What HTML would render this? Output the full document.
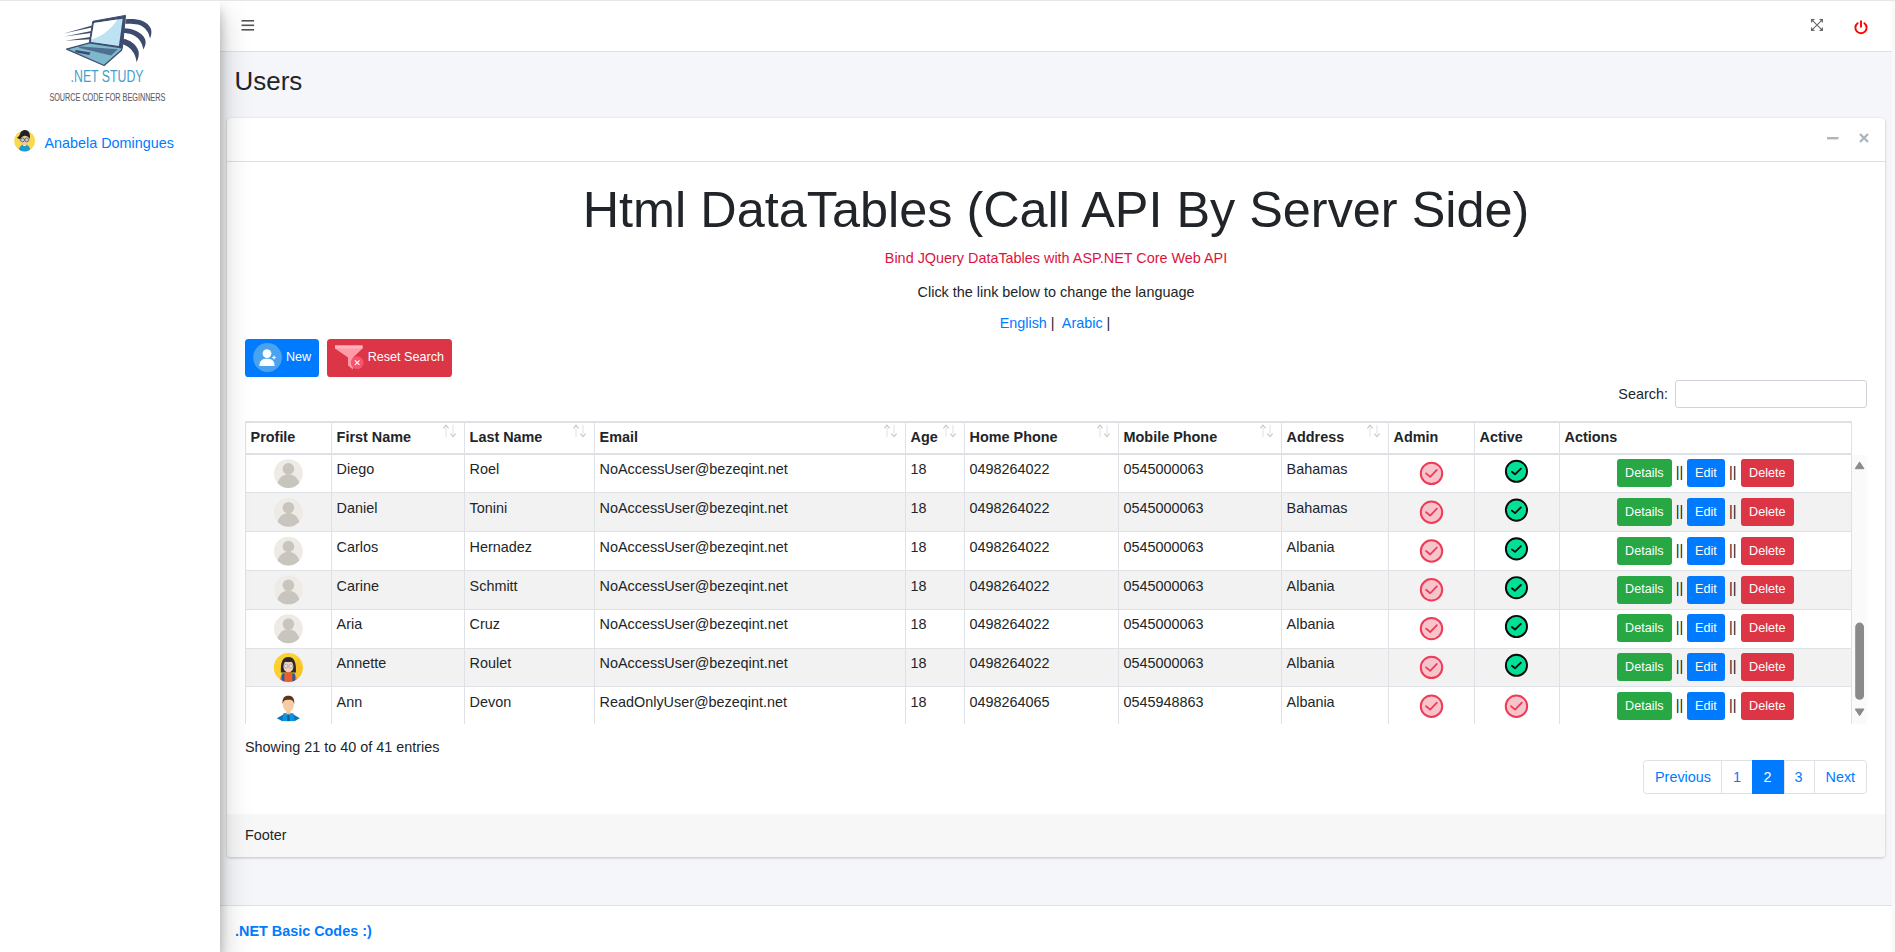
<!DOCTYPE html>
<html><head><meta charset="utf-8">
<style>
*{box-sizing:border-box;margin:0;padding:0}
html,body{width:1895px;height:952px;overflow:hidden}
body{position:relative;background:#f4f6f9;font-family:"Liberation Sans",sans-serif;color:#212529;font-size:14.4px}
.a{position:absolute}
.t{position:absolute;white-space:nowrap;line-height:1}
#topline{left:0;top:0;width:1895px;height:1px;background:#e6e6e6;z-index:20}
#rstrip{left:1892px;top:1px;width:3px;height:951px;background:#f9f9f9;z-index:15}
#sidebar{left:0;top:1px;width:220px;height:951px;background:#fff;z-index:10;box-shadow:0 14px 28px rgba(0,0,0,.25),0 10px 10px rgba(0,0,0,.22)}
#nav{left:220px;top:1px;width:1672px;height:51px;background:#fff;border-bottom:1px solid #dee2e6}
#card{left:227px;top:118px;width:1658px;height:739px;background:#fff;border-radius:3.6px;box-shadow:0 0 1px rgba(0,0,0,.125),0 1px 3px rgba(0,0,0,.2)}
#cardhead{left:0;top:0;width:1658px;height:44px;border-bottom:1px solid rgba(0,0,0,.125)}
#cardfoot{left:0;top:695.7px;width:1658px;height:43.3px;background:#f7f7f7;border-radius:0 0 3.6px 3.6px}
#mainfoot{left:220px;top:905px;width:1672px;height:47px;background:#fff;border-top:1px solid #dee2e6}
.ctr{left:0;width:1658px;text-align:center}
a{color:#007bff;text-decoration:none}
.btn{position:absolute;border-radius:3.6px;color:#fff;font-size:12.6px}
</style></head><body>
<div id="topline" class="a"></div>
<div id="rstrip" class="a"></div>

<div id="sidebar" class="a">
  <svg class="a" style="left:0;top:-1px" width="220" height="110" viewBox="0 0 220 110">
    <!-- swoosh lines left -->
    <path d="M63.8 33.4 L92 25.4 L91.7 27.6 Z" fill="#3d4b6e"/>
    <path d="M64.4 36.6 L91.4 30.9 L91.1 33.1 Z" fill="#3d4b6e"/>
    <path d="M65 40.7 L90.6 37.0 L90.3 39.2 Z" fill="#3d4b6e"/>
    <!-- right arcs -->
    <path d="M125.8 19.3 C136 18.5 147 20 151 29 C152 33 151 36 150 38.5 C149 33 146 27 138 24.5 C133 23.5 128 23.5 125.2 23.8 Z" fill="#3d4b6e"/>
    <path d="M124.3 28.2 C133 28.5 142 32 145 39 C146.5 43 145 47 143.2 49.5 C142.5 43 139 37.5 132 34.5 C129 33.5 126 33 123.8 33 Z" fill="#3d4b6e"/>
    <path d="M123.2 38.8 C130 40 136 44 138.5 51 C139.5 55 138 59 136.6 62.3 C136 56 133 50 127.5 46.5 C125.5 45.5 123.5 44.5 122.5 44.3 Z" fill="#3d4b6e"/>
    <!-- screen -->
    <path d="M92.8 21.3 L125.5 15.4 L122.4 47.8 L89.3 42.8 Z" fill="#3d4b6e" stroke="#3d4b6e" stroke-width="1" stroke-linejoin="round"/>
    <path d="M94 22.9 L122.7 18.8 L118.9 45.9 L90.9 42.1 Z" fill="#bde2f2"/>
    <path d="M94 22.9 L117.3 19.5 C112 28 103 36 91.3 39.6 Z" fill="#ffffff"/>
    <!-- base -->
    <path d="M66.6 49.1 L89.6 42.8 L122.1 47.8 L121.4 50.2 L104.1 65.5 Z" fill="#7db8cc" stroke="#3d4b6e" stroke-width="1.3" stroke-linejoin="round"/>
    <path d="M77.8 46.2 L117.8 49.3 L111 55.4 L79.5 48.0 Z" fill="#4f6f90"/>
    <path d="M75.6 49.9 L90.6 52.4 L89.2 55.0 L75.2 52.3 Z" fill="#3d4b6e"/>
    <text x="70.6" y="82.2" font-family="Liberation Sans" font-size="17" fill="#449fc7" transform="translate(70.6 82.2) scale(0.725 1) translate(-70.6 -82.2)">.NET STUDY</text>
    <text x="49.4" y="101" font-family="Liberation Sans" font-size="10.4" fill="#5f5d66" stroke="#5f5d66" stroke-width="0.1" transform="translate(49.4 101) scale(0.697 1) translate(-49.4 -101)">SOURCE CODE FOR BEGINNERS</text>
  </svg>
  <svg class="a" style="left:14px;top:128px" width="22" height="24" viewBox="0 0 22 24">
    <defs><clipPath id="uc"><circle cx="10.6" cy="11.9" r="10.5"/></clipPath></defs>
    <circle cx="10.6" cy="11.9" r="10.5" fill="#f9da4f"/>
    <g clip-path="url(#uc)">
      <path d="M4.6 24 C4.6 18 7 15.6 10.6 15.6 C14.2 15.6 16.6 18 16.6 24 Z" fill="#1b9ad8"/>
    </g>
    <rect x="9.4" y="13.5" width="2.4" height="2.8" fill="#f0b08c"/>
    <ellipse cx="10.6" cy="16.3" rx="1.7" ry="0.8" fill="#f4f4f4"/>
    <circle cx="5.8" cy="11.3" r="1.1" fill="#f2b690"/>
    <circle cx="15.4" cy="11.3" r="1.1" fill="#f2b690"/>
    <ellipse cx="10.6" cy="11" rx="4.3" ry="4.8" fill="#f5c39c"/>
    <path d="M2.9 8.7 C4.5 8 5.5 7 6 5 C7 2 9 1 11.1 1.1 C14 1.2 16 3.5 16 7.5 L15.6 10 C14.5 7.5 12 6.5 10.5 6.8 C8.5 7 7 8.5 6.3 10.5 Z" fill="#1e2326"/>
    <circle cx="8.6" cy="10.9" r="1.9" fill="#b9d5e0" stroke="#454545" stroke-width="0.7"/>
    <circle cx="12.7" cy="10.9" r="1.9" fill="#b9d5e0" stroke="#454545" stroke-width="0.7"/>
  </svg>
  <div class="t" style="left:44.4px;top:134.6px;color:#007bff">Anabela Domingues</div>
</div>

<div id="nav" class="a">
  <svg class="a" style="left:21px;top:18px" width="14" height="13" viewBox="0 0 14 13">
    <rect x="0.5" y="1" width="12.6" height="1.6" fill="#555"/>
    <rect x="0.5" y="5.5" width="12.6" height="1.6" fill="#555"/>
    <rect x="0.5" y="10" width="12.6" height="1.6" fill="#555"/>
  </svg>
  <svg class="a" style="left:1591px;top:17.8px" width="12" height="12" viewBox="0 0 12 12">
    <path d="M1.6 1.6 L10.4 10.4 M10.4 1.6 L1.6 10.4" stroke="#6a6a6a" stroke-width="1.1"/>
    <path d="M0 0 H4 L0 4 Z M12 0 H8 L12 4 Z M0 12 H4 L0 8 Z M12 12 H8 L12 8 Z" fill="#6a6a6a"/>
  </svg>
  <svg class="a" style="left:1633px;top:18px" width="16" height="16" viewBox="0 0 16 16">
    <path d="M4.6 4.2 A5.6 5.6 0 1 0 11.4 4.2" fill="none" stroke="#ff0000" stroke-width="1.9" stroke-linecap="round"/>
    <path d="M8 2.2 V7.8" stroke="#ff0000" stroke-width="1.9" stroke-linecap="round"/>
  </svg>
</div>

<div class="t" style="left:234.6px;top:69.06px;font-size:25.92px;color:#212529">Users</div>

<div id="card" class="a">
  <div id="cardhead" class="a"></div>
  <svg class="a" style="left:1599px;top:19px" width="14" height="4" viewBox="0 0 14 4"><rect x="1" y="0" width="11.5" height="2.4" fill="#adb5bd"/></svg>
  <svg class="a" style="left:1630.5px;top:14.3px" width="12" height="12" viewBox="0 0 12 12"><path d="M2 2 L10 10 M10 2 L2 10" stroke="#adb5bd" stroke-width="2.4"/></svg>

  <div class="t ctr" style="top:67.1px;font-size:50.4px">Html DataTables (Call API By Server Side)</div>
  <div class="t ctr" style="top:133.4px;color:#dc143c">Bind JQuery DataTables with ASP.NET Core Web API</div>
  <div class="t ctr" style="top:166.5px">Click the link below to change the language</div>
  <div class="t ctr" style="top:197.5px;left:-1px"><a>English</a> |&nbsp; <a>Arabic</a> |</div>

  <div id="cardfoot" class="a"><div class="t" style="left:18px;top:14.1px">Footer</div></div>
</div>

<div id="mainfoot" class="a"><div class="t" style="left:15px;top:17.6px;font-weight:bold;color:#007bff">.NET Basic Codes :)</div></div>


<div class="a" style="left:245px;top:339px;width:74px;height:38px;background:#007bff;border-radius:3.6px;z-index:2">
  <svg class="a" style="left:8px;top:4px" width="30" height="30" viewBox="0 0 30 30">
    <circle cx="14.5" cy="14.5" r="14.4" fill="#4aa3ef"/>
    <circle cx="14" cy="10.6" r="4.4" fill="#fff"/>
    <path d="M6.4 23 C6.4 17.5 9.5 15.8 14 15.8 C18.5 15.8 21.6 17.5 21.6 23 Z" fill="#fff"/>
    <path d="M21 12 L21.7 13.8 L23.5 14.5 L21.7 15.2 L21 17 L20.3 15.2 L18.5 14.5 L20.3 13.8 Z" fill="#fff"/>
  </svg>
  <div class="t" style="left:41px;top:11.93px;font-size:12.6px;color:#fff">New</div>
</div>


<div class="a" style="left:327px;top:339px;width:125px;height:38px;background:#dc3545;border-radius:3.6px;z-index:2">
  <svg class="a" style="left:7px;top:5px" width="32" height="28" viewBox="0 0 32 28">
    <path d="M1 1.5 H28.5 V4.5 L19 13.5 V25.5 L14 21.5 V13.5 L1 4.5 Z" fill="#ff9aa8"/>
    <path d="M1 1.5 H28.5 V4.5 H1 Z" fill="#ffb3bd"/>
    <circle cx="23.2" cy="18.6" r="6.4" fill="#f5566e"/>
    <path d="M20.9 16.3 L25.5 20.9 M25.5 16.3 L20.9 20.9" stroke="#fff" stroke-width="1.1"/>
  </svg>
  <div class="t" style="left:40.7px;top:11.93px;font-size:12.6px;color:#fff">Reset Search</div>
</div>

<div class="t" style="left:1618.3px;top:386.81px">Search:</div>
<div class="a" style="left:1675px;top:380px;width:192px;height:28px;border:1px solid #ced4da;border-radius:3px;background:#fff"></div>
<div class="a" style="left:245px;top:421px;width:1607px;height:2px;background:#dee2e6"></div>
<div class="a" style="left:245px;top:453px;width:1607px;height:2px;background:#dee2e6"></div>
<div class="a" style="left:245px;top:421px;width:1px;height:34px;background:#dee2e6"></div>
<div class="a" style="left:331px;top:421px;width:1px;height:34px;background:#dee2e6"></div>
<div class="a" style="left:464px;top:421px;width:1px;height:34px;background:#dee2e6"></div>
<div class="a" style="left:594px;top:421px;width:1px;height:34px;background:#dee2e6"></div>
<div class="a" style="left:905px;top:421px;width:1px;height:34px;background:#dee2e6"></div>
<div class="a" style="left:964px;top:421px;width:1px;height:34px;background:#dee2e6"></div>
<div class="a" style="left:1118px;top:421px;width:1px;height:34px;background:#dee2e6"></div>
<div class="a" style="left:1281px;top:421px;width:1px;height:34px;background:#dee2e6"></div>
<div class="a" style="left:1388px;top:421px;width:1px;height:34px;background:#dee2e6"></div>
<div class="a" style="left:1474px;top:421px;width:1px;height:34px;background:#dee2e6"></div>
<div class="a" style="left:1559px;top:421px;width:1px;height:34px;background:#dee2e6"></div>
<div class="a" style="left:1851px;top:421px;width:1px;height:34px;background:#dee2e6"></div>
<div class="t" style="left:250.60px;top:429.81px;font-weight:bold">Profile</div>
<div class="t" style="left:336.60px;top:429.81px;font-weight:bold">First Name</div>
<svg class="a" style="left:443px;top:424px" width="16" height="14"><use href="#sortarr"/></svg>
<div class="t" style="left:469.60px;top:429.81px;font-weight:bold">Last Name</div>
<svg class="a" style="left:573px;top:424px" width="16" height="14"><use href="#sortarr"/></svg>
<div class="t" style="left:599.60px;top:429.81px;font-weight:bold">Email</div>
<svg class="a" style="left:884px;top:424px" width="16" height="14"><use href="#sortarr"/></svg>
<div class="t" style="left:910.60px;top:429.81px;font-weight:bold">Age</div>
<svg class="a" style="left:943px;top:424px" width="16" height="14"><use href="#sortarr"/></svg>
<div class="t" style="left:969.60px;top:429.81px;font-weight:bold">Home Phone</div>
<svg class="a" style="left:1097px;top:424px" width="16" height="14"><use href="#sortarr"/></svg>
<div class="t" style="left:1123.60px;top:429.81px;font-weight:bold">Mobile Phone</div>
<svg class="a" style="left:1260px;top:424px" width="16" height="14"><use href="#sortarr"/></svg>
<div class="t" style="left:1286.60px;top:429.81px;font-weight:bold">Address</div>
<svg class="a" style="left:1367px;top:424px" width="16" height="14"><use href="#sortarr"/></svg>
<div class="t" style="left:1393.60px;top:429.81px;font-weight:bold">Admin</div>
<div class="t" style="left:1479.60px;top:429.81px;font-weight:bold">Active</div>
<div class="t" style="left:1564.60px;top:429.81px;font-weight:bold">Actions</div>
<div class="a" style="left:245px;top:455px;width:1607px;height:269px;overflow:hidden;z-index:1">
<div class="a" style="left:0;top:-2px;width:1607px;height:39px;background:#fff;border-top:1px solid #dee2e6"></div>
<div class="t" style="left:91.60px;top:7.11px">Diego</div>
<div class="t" style="left:224.60px;top:7.11px">Roel</div>
<div class="t" style="left:354.60px;top:7.11px">NoAccessUser@bezeqint.net</div>
<div class="t" style="left:665.60px;top:7.11px">18</div>
<div class="t" style="left:724.60px;top:7.11px">0498264022</div>
<div class="t" style="left:878.60px;top:7.11px">0545000063</div>
<div class="t" style="left:1041.60px;top:7.11px">Bahamas</div>
<div class="a" style="left:1372.00px;top:4.00px;width:54.7px;height:28px;background:#28a745;border-radius:2.9px"></div>
<div class="t" style="left:1380.10px;top:11.63px;font-size:12.6px;color:#fff">Details</div>
<div class="t" style="left:1430.70px;top:10.11px">||</div>
<div class="a" style="left:1442.00px;top:4.00px;width:37.9px;height:28px;background:#007bff;border-radius:2.9px"></div>
<div class="t" style="left:1450.10px;top:11.63px;font-size:12.6px;color:#fff">Edit</div>
<div class="t" style="left:1483.90px;top:10.11px">||</div>
<div class="a" style="left:1496.00px;top:4.00px;width:52.6px;height:28px;background:#dc3545;border-radius:2.9px"></div>
<div class="t" style="left:1504.10px;top:11.63px;font-size:12.6px;color:#fff">Delete</div>
<div class="a" style="left:0;top:37px;width:1607px;height:39px;background:#f2f2f2;border-top:1px solid #dee2e6"></div>
<div class="t" style="left:91.60px;top:46.11px">Daniel</div>
<div class="t" style="left:224.60px;top:46.11px">Tonini</div>
<div class="t" style="left:354.60px;top:46.11px">NoAccessUser@bezeqint.net</div>
<div class="t" style="left:665.60px;top:46.11px">18</div>
<div class="t" style="left:724.60px;top:46.11px">0498264022</div>
<div class="t" style="left:878.60px;top:46.11px">0545000063</div>
<div class="t" style="left:1041.60px;top:46.11px">Bahamas</div>
<div class="a" style="left:1372.00px;top:43.00px;width:54.7px;height:28px;background:#28a745;border-radius:2.9px"></div>
<div class="t" style="left:1380.10px;top:50.63px;font-size:12.6px;color:#fff">Details</div>
<div class="t" style="left:1430.70px;top:49.11px">||</div>
<div class="a" style="left:1442.00px;top:43.00px;width:37.9px;height:28px;background:#007bff;border-radius:2.9px"></div>
<div class="t" style="left:1450.10px;top:50.63px;font-size:12.6px;color:#fff">Edit</div>
<div class="t" style="left:1483.90px;top:49.11px">||</div>
<div class="a" style="left:1496.00px;top:43.00px;width:52.6px;height:28px;background:#dc3545;border-radius:2.9px"></div>
<div class="t" style="left:1504.10px;top:50.63px;font-size:12.6px;color:#fff">Delete</div>
<div class="a" style="left:0;top:76px;width:1607px;height:39px;background:#fff;border-top:1px solid #dee2e6"></div>
<div class="t" style="left:91.60px;top:85.11px">Carlos</div>
<div class="t" style="left:224.60px;top:85.11px">Hernadez</div>
<div class="t" style="left:354.60px;top:85.11px">NoAccessUser@bezeqint.net</div>
<div class="t" style="left:665.60px;top:85.11px">18</div>
<div class="t" style="left:724.60px;top:85.11px">0498264022</div>
<div class="t" style="left:878.60px;top:85.11px">0545000063</div>
<div class="t" style="left:1041.60px;top:85.11px">Albania</div>
<div class="a" style="left:1372.00px;top:82.00px;width:54.7px;height:28px;background:#28a745;border-radius:2.9px"></div>
<div class="t" style="left:1380.10px;top:89.63px;font-size:12.6px;color:#fff">Details</div>
<div class="t" style="left:1430.70px;top:88.11px">||</div>
<div class="a" style="left:1442.00px;top:82.00px;width:37.9px;height:28px;background:#007bff;border-radius:2.9px"></div>
<div class="t" style="left:1450.10px;top:89.63px;font-size:12.6px;color:#fff">Edit</div>
<div class="t" style="left:1483.90px;top:88.11px">||</div>
<div class="a" style="left:1496.00px;top:82.00px;width:52.6px;height:28px;background:#dc3545;border-radius:2.9px"></div>
<div class="t" style="left:1504.10px;top:89.63px;font-size:12.6px;color:#fff">Delete</div>
<div class="a" style="left:0;top:115px;width:1607px;height:39px;background:#f2f2f2;border-top:1px solid #dee2e6"></div>
<div class="t" style="left:91.60px;top:124.11px">Carine</div>
<div class="t" style="left:224.60px;top:124.11px">Schmitt</div>
<div class="t" style="left:354.60px;top:124.11px">NoAccessUser@bezeqint.net</div>
<div class="t" style="left:665.60px;top:124.11px">18</div>
<div class="t" style="left:724.60px;top:124.11px">0498264022</div>
<div class="t" style="left:878.60px;top:124.11px">0545000063</div>
<div class="t" style="left:1041.60px;top:124.11px">Albania</div>
<div class="a" style="left:1372.00px;top:121.00px;width:54.7px;height:28px;background:#28a745;border-radius:2.9px"></div>
<div class="t" style="left:1380.10px;top:127.63px;font-size:12.6px;color:#fff">Details</div>
<div class="t" style="left:1430.70px;top:126.11px">||</div>
<div class="a" style="left:1442.00px;top:121.00px;width:37.9px;height:28px;background:#007bff;border-radius:2.9px"></div>
<div class="t" style="left:1450.10px;top:127.63px;font-size:12.6px;color:#fff">Edit</div>
<div class="t" style="left:1483.90px;top:126.11px">||</div>
<div class="a" style="left:1496.00px;top:121.00px;width:52.6px;height:28px;background:#dc3545;border-radius:2.9px"></div>
<div class="t" style="left:1504.10px;top:127.63px;font-size:12.6px;color:#fff">Delete</div>
<div class="a" style="left:0;top:154px;width:1607px;height:39px;background:#fff;border-top:1px solid #dee2e6"></div>
<div class="t" style="left:91.60px;top:162.11px">Aria</div>
<div class="t" style="left:224.60px;top:162.11px">Cruz</div>
<div class="t" style="left:354.60px;top:162.11px">NoAccessUser@bezeqint.net</div>
<div class="t" style="left:665.60px;top:162.11px">18</div>
<div class="t" style="left:724.60px;top:162.11px">0498264022</div>
<div class="t" style="left:878.60px;top:162.11px">0545000063</div>
<div class="t" style="left:1041.60px;top:162.11px">Albania</div>
<div class="a" style="left:1372.00px;top:159.00px;width:54.7px;height:28px;background:#28a745;border-radius:2.9px"></div>
<div class="t" style="left:1380.10px;top:166.63px;font-size:12.6px;color:#fff">Details</div>
<div class="t" style="left:1430.70px;top:165.11px">||</div>
<div class="a" style="left:1442.00px;top:159.00px;width:37.9px;height:28px;background:#007bff;border-radius:2.9px"></div>
<div class="t" style="left:1450.10px;top:166.63px;font-size:12.6px;color:#fff">Edit</div>
<div class="t" style="left:1483.90px;top:165.11px">||</div>
<div class="a" style="left:1496.00px;top:159.00px;width:52.6px;height:28px;background:#dc3545;border-radius:2.9px"></div>
<div class="t" style="left:1504.10px;top:166.63px;font-size:12.6px;color:#fff">Delete</div>
<div class="a" style="left:0;top:193px;width:1607px;height:38px;background:#f2f2f2;border-top:1px solid #dee2e6"></div>
<div class="t" style="left:91.60px;top:201.11px">Annette</div>
<div class="t" style="left:224.60px;top:201.11px">Roulet</div>
<div class="t" style="left:354.60px;top:201.11px">NoAccessUser@bezeqint.net</div>
<div class="t" style="left:665.60px;top:201.11px">18</div>
<div class="t" style="left:724.60px;top:201.11px">0498264022</div>
<div class="t" style="left:878.60px;top:201.11px">0545000063</div>
<div class="t" style="left:1041.60px;top:201.11px">Albania</div>
<div class="a" style="left:1372.00px;top:198.00px;width:54.7px;height:28px;background:#28a745;border-radius:2.9px"></div>
<div class="t" style="left:1380.10px;top:205.63px;font-size:12.6px;color:#fff">Details</div>
<div class="t" style="left:1430.70px;top:204.11px">||</div>
<div class="a" style="left:1442.00px;top:198.00px;width:37.9px;height:28px;background:#007bff;border-radius:2.9px"></div>
<div class="t" style="left:1450.10px;top:205.63px;font-size:12.6px;color:#fff">Edit</div>
<div class="t" style="left:1483.90px;top:204.11px">||</div>
<div class="a" style="left:1496.00px;top:198.00px;width:52.6px;height:28px;background:#dc3545;border-radius:2.9px"></div>
<div class="t" style="left:1504.10px;top:205.63px;font-size:12.6px;color:#fff">Delete</div>
<div class="a" style="left:0;top:231px;width:1607px;height:39px;background:#fff;border-top:1px solid #dee2e6"></div>
<div class="t" style="left:91.60px;top:240.11px">Ann</div>
<div class="t" style="left:224.60px;top:240.11px">Devon</div>
<div class="t" style="left:354.60px;top:240.11px">ReadOnlyUser@bezeqint.net</div>
<div class="t" style="left:665.60px;top:240.11px">18</div>
<div class="t" style="left:724.60px;top:240.11px">0498264065</div>
<div class="t" style="left:878.60px;top:240.11px">0545948863</div>
<div class="t" style="left:1041.60px;top:240.11px">Albania</div>
<div class="a" style="left:1372.00px;top:237.00px;width:54.7px;height:28px;background:#28a745;border-radius:2.9px"></div>
<div class="t" style="left:1380.10px;top:244.63px;font-size:12.6px;color:#fff">Details</div>
<div class="t" style="left:1430.70px;top:243.11px">||</div>
<div class="a" style="left:1442.00px;top:237.00px;width:37.9px;height:28px;background:#007bff;border-radius:2.9px"></div>
<div class="t" style="left:1450.10px;top:244.63px;font-size:12.6px;color:#fff">Edit</div>
<div class="t" style="left:1483.90px;top:243.11px">||</div>
<div class="a" style="left:1496.00px;top:237.00px;width:52.6px;height:28px;background:#dc3545;border-radius:2.9px"></div>
<div class="t" style="left:1504.10px;top:244.63px;font-size:12.6px;color:#fff">Delete</div>
<div class="a" style="left:0px;top:0;width:1px;height:269px;background:#dee2e6"></div>
<div class="a" style="left:86px;top:0;width:1px;height:269px;background:#dee2e6"></div>
<div class="a" style="left:219px;top:0;width:1px;height:269px;background:#dee2e6"></div>
<div class="a" style="left:349px;top:0;width:1px;height:269px;background:#dee2e6"></div>
<div class="a" style="left:660px;top:0;width:1px;height:269px;background:#dee2e6"></div>
<div class="a" style="left:719px;top:0;width:1px;height:269px;background:#dee2e6"></div>
<div class="a" style="left:873px;top:0;width:1px;height:269px;background:#dee2e6"></div>
<div class="a" style="left:1036px;top:0;width:1px;height:269px;background:#dee2e6"></div>
<div class="a" style="left:1143px;top:0;width:1px;height:269px;background:#dee2e6"></div>
<div class="a" style="left:1229px;top:0;width:1px;height:269px;background:#dee2e6"></div>
<div class="a" style="left:1314px;top:0;width:1px;height:269px;background:#dee2e6"></div>
<div class="a" style="left:1606px;top:0;width:1px;height:269px;background:#dee2e6"></div>
<svg class="a" style="left:0;top:0" width="1607" height="269" viewBox="0 0 1607 269"><use href="#av_def" x="28.40" y="3.55" width="30" height="30"/><use href="#chk_pink" x="1173.50" y="5.40" width="26" height="26"/><use href="#chk_green" x="1258.45" y="3.30" width="26" height="26"/><use href="#av_def" x="28.40" y="42.35" width="30" height="30"/><use href="#chk_pink" x="1173.50" y="44.20" width="26" height="26"/><use href="#chk_green" x="1258.45" y="42.10" width="26" height="26"/><use href="#av_def" x="28.40" y="81.15" width="30" height="30"/><use href="#chk_pink" x="1173.50" y="83.00" width="26" height="26"/><use href="#chk_green" x="1258.45" y="80.90" width="26" height="26"/><use href="#av_def" x="28.40" y="119.95" width="30" height="30"/><use href="#chk_pink" x="1173.50" y="121.80" width="26" height="26"/><use href="#chk_green" x="1258.45" y="119.70" width="26" height="26"/><use href="#av_def" x="28.40" y="158.75" width="30" height="30"/><use href="#chk_pink" x="1173.50" y="160.60" width="26" height="26"/><use href="#chk_green" x="1258.45" y="158.50" width="26" height="26"/><use href="#av_girl" x="28.40" y="197.55" width="30" height="30"/><use href="#chk_pink" x="1173.50" y="199.40" width="26" height="26"/><use href="#chk_green" x="1258.45" y="197.30" width="26" height="26"/><use href="#av_boy" x="28.40" y="236.35" width="30" height="30"/><use href="#chk_pink" x="1173.50" y="238.20" width="26" height="26"/><use href="#chk_pink" x="1258.45" y="238.20" width="26" height="26"/></svg>
</div>
<div class="a" style="left:1852px;top:455px;width:15px;height:269px;background:#fafafa"></div>
<svg class="a" style="left:1852px;top:455px" width="15" height="269" viewBox="0 0 15 269"><path d="M3.2 13.7 L7.6 7 L12 13.7 Z" fill="#8a8a8a" stroke="#8a8a8a" stroke-width="1" stroke-linejoin="round"/><rect x="3.2" y="167.6" width="8.8" height="77.2" rx="4.4" fill="#8a8a8a"/><path d="M3.2 254 L7.6 260.7 L12 254 Z" fill="#8a8a8a" stroke="#8a8a8a" stroke-width="1" stroke-linejoin="round"/></svg>
<div class="t" style="left:245px;top:739.81px">Showing 21 to 40 of 41 entries</div>
<div class="a" style="left:1643px;top:760px;width:223.5px;height:33.5px;border:1px solid #dee2e6;border-radius:3.6px;background:#fff"></div>
<div class="a" style="left:1721px;top:760px;width:1px;height:33.5px;background:#dee2e6"></div>
<div class="a" style="left:1752px;top:760px;width:1px;height:33.5px;background:#dee2e6"></div>
<div class="a" style="left:1784px;top:760px;width:1px;height:33.5px;background:#dee2e6"></div>
<div class="a" style="left:1814px;top:760px;width:1px;height:33.5px;background:#dee2e6"></div>
<div class="a" style="left:1752px;top:760px;width:32px;height:33.5px;background:#007bff"></div>
<div class="t" style="left:1655.00px;top:769.81px;color:#007bff">Previous</div>
<div class="t" style="left:1733.00px;top:769.81px;color:#007bff">1</div>
<div class="t" style="left:1763.50px;top:769.81px;color:#fff">2</div>
<div class="t" style="left:1794.50px;top:769.81px;color:#007bff">3</div>
<div class="t" style="left:1825.50px;top:769.81px;color:#007bff">Next</div>

<svg width="0" height="0" style="position:absolute">
 <defs>
  <clipPath id="cc"><circle cx="15" cy="15" r="14.4"/></clipPath>
  <symbol id="av_def" viewBox="0 0 30 30">
   <circle cx="15" cy="15" r="14.4" fill="#eeebe7"/>
   <g clip-path="url(#cc)"><circle cx="15" cy="10.35" r="5.8" fill="#c8c4be"/><ellipse cx="15" cy="27.8" rx="11.3" ry="12.2" fill="#c8c4be"/></g>
  </symbol>
  <symbol id="av_girl" viewBox="0 0 30 30">
   <circle cx="15" cy="15" r="14.6" fill="#fcd02f"/>
   <path d="M24 5 L29 15 A14.6 14.6 0 0 1 20 28.5 Z" fill="#f9c229"/>
   <path d="M7.5 20 C7 10 9 4.5 15 4.5 C21 4.5 23 10 22.5 20 Z" fill="#2b2b2b"/>
   <ellipse cx="15" cy="14" rx="5" ry="6" fill="#f5cdb5"/>
   <path d="M10 8 C12 10 18 10 20 8 C19 6 17 5.5 15 5.5 C13 5.5 11 6 10 8Z" fill="#2b2b2b"/>
   <circle cx="12.7" cy="13.5" r="1.9" fill="#dde" stroke="#999" stroke-width=".6"/>
   <circle cx="17.3" cy="13.5" r="1.9" fill="#dde" stroke="#999" stroke-width=".6"/>
   <g clip-path="url(#cc)"><path d="M6.5 31 C6.5 22 9 20 15 20 C21 20 23.5 22 23.5 31 Z" fill="#f15a29"/>
   <path d="M8.5 21 L11 21 L11 31 L8.5 31 Z M19 21 L21.5 21 L21.5 31 L19 31 Z" fill="#1b5fae"/></g>
  </symbol>
  <symbol id="av_boy" viewBox="0 0 30 30">
   <path d="M3.5 27 L12 22 H18 L26.5 27 L21 30 H9 Z" fill="#0b75b8"/>
   <path d="M10 22 H20 L21 30 H9 Z" fill="#0a95e0"/>
   <path d="M14 22 H16 L16.2 30 H13.8 Z" fill="#0b5f98"/>
   <rect x="13" y="18" width="4" height="5" fill="#f3c39c"/>
   <ellipse cx="15" cy="13.5" rx="5.6" ry="6.5" fill="#f7cba3"/>
   <path d="M9.2 13 C8.5 7 11 4.5 15 4.5 C19 4.5 21.5 7 20.8 13 C20 9 18 8.5 15 8.5 C12 8.5 10 9 9.2 13Z" fill="#5b3716"/>
  </symbol>
  <symbol id="sortarr" viewBox="0 0 16 14">
   <rect x="2.4" y="3.5" width="1.2" height="9.4" fill="#e6e6e6"/>
   <path d="M0.4 4.4 L3 1.2 L5.6 4.4" fill="none" stroke="#c6c6c6" stroke-width="1.1"/>
   <rect x="9.4" y="0.8" width="1.2" height="9.4" fill="#e6e6e6"/>
   <path d="M7.4 9.6 L10 12.6 L12.6 9.6" fill="none" stroke="#c6c6c6" stroke-width="1.1"/>
  </symbol>
  <symbol id="chk_pink" viewBox="0 0 26 26">
   <circle cx="13" cy="13" r="10.7" fill="#f8c4cc" stroke="#ee3b58" stroke-width="2"/>
   <path d="M7.6 13 L11.7 16.45 L18.35 9.5" fill="none" stroke="#ee3b58" stroke-width="1.8" stroke-linecap="round" stroke-linejoin="round"/>
  </symbol>
  <symbol id="chk_green" viewBox="0 0 26 26">
   <circle cx="13" cy="13" r="10.6" fill="#00e096" stroke="#0a0a0a" stroke-width="1.9"/>
   <path d="M8.45 13.5 L11.6 16 L17.45 10.3" fill="none" stroke="#0a0a0a" stroke-width="1.8" stroke-linecap="round" stroke-linejoin="round"/>
  </symbol>
 </defs>
</svg>

</body></html>
